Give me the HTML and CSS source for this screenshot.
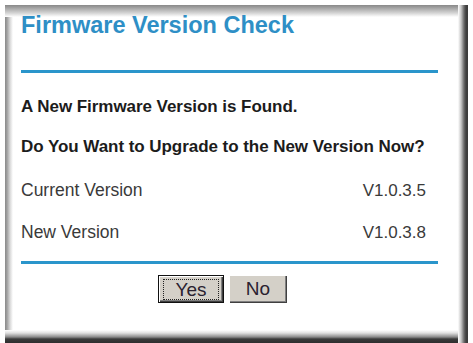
FILE: index.html
```html
<!DOCTYPE html>
<html>
<head>
<meta charset="utf-8">
<link rel="stylesheet" href="styles.css">
</head>
<body>
<div class="frame">
  <h1 class="title">Firmware Version Check</h1>
  <div class="rule rule-top"></div>
  <div class="row row-msg"><span class="bold">A New Firmware Version is Found.</span></div>
  <div class="row row-ask"><span class="bold">Do You Want to Upgrade to the New Version Now?</span></div>
  <div class="row row-ver"><span class="label">Current Version</span><span class="value">V1.0.3.5</span></div>
  <div class="row row-ver2"><span class="label">New Version</span><span class="value">V1.0.3.8</span></div>
  <div class="rule rule-bottom"></div>
  <div class="buttons">
    <button class="btn btn-default"><span class="focus">Yes</span></button>
    <button class="btn btn-no">No</button>
  </div>
</div>
</body>
</html>
```
FILE: styles.css
```css
html, body {
  margin: 0;
  padding: 0;
  background: #fff;
}
body {
  font-family: "Liberation Sans", Arial, sans-serif;
}
.frame {
  margin: 5px 0 0 5px;
  width: 463px;
  height: 338px;
  box-sizing: border-box;
  padding: 7px 0 0 16px;
  background:
    linear-gradient(to left, #3a3a3a 0, #3f3f3f 2px, #6a6a6a 4px, #c8c8c8 7px, #fff 10px) right top / 10px 100% no-repeat,
    linear-gradient(to top, #2e2e2e 0, #3a3a3a 4px, #8a8a8a 6px, #e0e0e0 10px, #fff 13px) left bottom / 100% 13px no-repeat,
    linear-gradient(to bottom, #888 0, #a4a4a4 3px, #d4d4d4 8px, #fff 12px) left top / 100% 12px no-repeat,
    linear-gradient(to right, #8a8a8a 0, #a0a0a0 2px, #d8d8d8 5px, #fff 8px) left top / 8px 100% no-repeat,
    #fff;
}
.title {
  margin: 0;
  font-size: 23.5px;
  line-height: 26px;
  font-weight: bold;
  color: #2e8fc6;
  white-space: nowrap;
}
.rule {
  width: 417px;
  height: 3px;
  background: #2a95cb;
}
.rule-top {
  margin-top: 32px;
}
.row {
  display: flex;
  justify-content: space-between;
  align-items: baseline;
  width: 417px;
  height: 20px;
  box-sizing: border-box;
  padding-right: 12px;
  font-size: 17px;
  line-height: 20px;
  white-space: nowrap;
}
.row-msg { margin-top: 24px; }
.row-ask { margin-top: 20px; }
.row-ver { margin-top: 23px; }
.row-ver2 { margin-top: 22px; }
.bold {
  font-weight: bold;
  color: #1c1c1c;
  letter-spacing: -0.05px;
}
.label, .value {
  color: #3a3a3a;
}
.label {
  font-size: 17.5px;
}
.rule-bottom {
  margin-top: 19px;
}
.buttons {
  display: flex;
  gap: 5px;
  padding-left: 137px;
  margin-top: 11px;
}
.btn {
  height: 28px;
  margin: 0;
  padding: 0;
  font-family: "Liberation Sans", Arial, sans-serif;
  font-size: 19px;
  color: #2a2230;
  background: #d4d0c8;
  cursor: default;
}
.btn-default {
  width: 66px;
  border: 1px solid #111;
  box-shadow: inset 1px 1px #fff, inset -1px -1px #404040, inset -2px -2px #808080;
  display: flex;
  align-items: center;
  justify-content: center;
}
.focus {
  display: block;
  width: 54px;
  height: 19px;
  line-height: 19px;
  border: 1px dotted #222;
}
.btn-no {
  width: 58px;
  border: 0;
  box-shadow: inset 1px 1px #fff, inset -1px -1px #404040, inset -2px -2px #808080;
}
```
